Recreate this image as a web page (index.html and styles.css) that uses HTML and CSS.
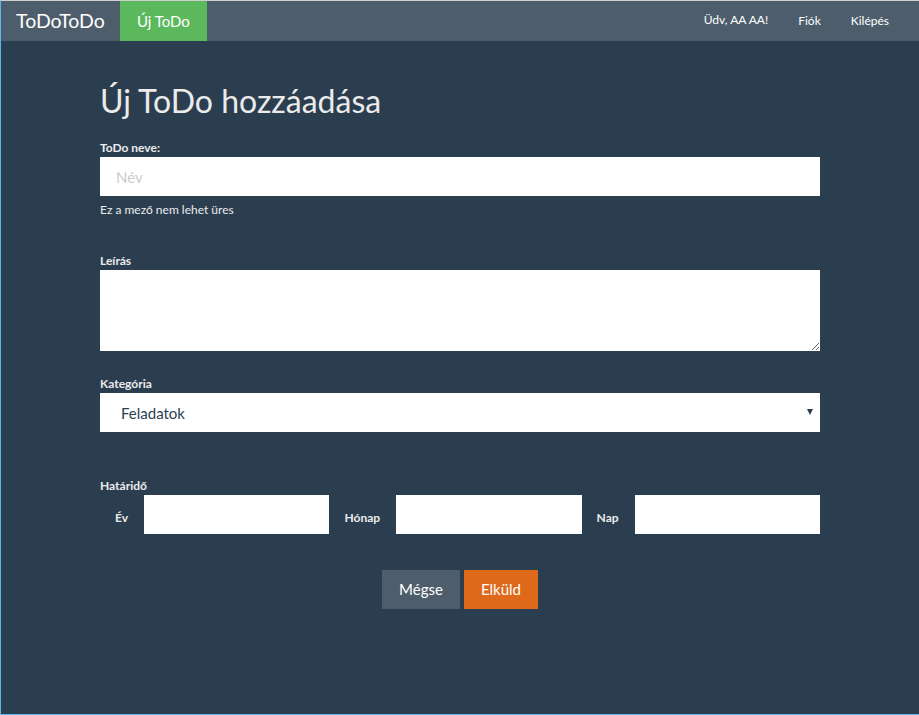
FILE: index.html
```html
<!DOCTYPE html>
<html lang="hu">
<head>
<meta charset="utf-8">
<title>Új ToDo hozzáadása</title>
<link rel="stylesheet" href="styles.css">
</head>
<body>
<div class="page">
  <nav class="navbar">
    <a class="brand" href="#">ToDoToDo</a>
    <a class="nav-new" href="#">Új ToDo</a>
    <div class="nav-right">
      <span class="nav-item nav-text">Üdv, AA AA!</span>
      <a class="nav-item" href="#">Fiók</a>
      <a class="nav-item" href="#">Kilépés</a>
    </div>
  </nav>
  <main class="container">
    <h1 class="title">Új ToDo hozzáadása</h1>
    <form class="form">
      <div class="group">
        <label class="label" for="name">ToDo neve:</label>
        <input class="control" id="name" type="text" placeholder="Név">
        <p class="help">Ez a mező nem lehet üres</p>
      </div>
      <div class="group group-desc">
        <label class="label" for="desc">Leírás</label>
        <textarea class="control textarea" id="desc"></textarea>
      </div>
      <div class="group group-cat">
        <label class="label" for="cat">Kategória</label>
        <div class="select-wrap">
          <select class="control select" id="cat">
            <option>Feladatok</option>
          </select>
        </div>
      </div>
      <div class="group group-date">
        <label class="label">Határidő</label>
        <div class="date-row">
          <label class="date-label" for="ev">Év</label>
          <input class="control date-input" id="ev" type="text">
          <label class="date-label" for="honap">Hónap</label>
          <input class="control date-input" id="honap" type="text">
          <label class="date-label" for="nap">Nap</label>
          <input class="control date-input" id="nap" type="text">
        </div>
      </div>
      <div class="actions">
        <button type="button" class="btn btn-cancel">Mégse</button>
        <button type="submit" class="btn btn-submit">Elküld</button>
      </div>
    </form>
  </main>
</div>
</body>
</html>
```
FILE: styles.css
```css
* {
  box-sizing: border-box;
}

html, body {
  margin: 0;
  padding: 0;
}

body {
  font-family: Lato, "Open Sans", "Liberation Sans", sans-serif;
  background: #2b3e50;
  color: #ebebeb;
  font-size: 15px;
}

.page {
  min-height: 715px;
  border-top: 1px solid #cfcfcf;
  border-left: 1px solid #5fb5ee;
  border-bottom: 1px solid #5fb5ee;
  background: #2b3e50;
}

.navbar {
  display: flex;
  align-items: stretch;
  height: 40px;
  background: #4e5d6c;
}

.navbar a {
  color: #ffffff;
  text-decoration: none;
}

.brand {
  padding: 0 15px;
  font-size: 19.5px;
  line-height: 40px;
  color: #ffffff;
}

.nav-new {
  padding: 0 17px;
  font-size: 15px;
  line-height: 40px;
  background: #5cb85c;
}

.nav-right {
  margin-left: auto;
  display: flex;
  padding-right: 15px;
}

.nav-item {
  padding: 0 15px;
  font-size: 12px;
  line-height: 40px;
  color: #ffffff;
}

.nav-text {
  line-height: 38px;
}

.container {
  width: 720px;
  margin: 0 auto;
}

.title {
  margin: 43px 0 0;
  font-size: 32px;
  line-height: 33px;
  font-weight: 400;
  color: #ebebeb;
}

.form {
  margin-top: 23px;
}

.label {
  display: block;
  font-size: 12px;
  line-height: 15px;
  font-weight: 700;
  margin-bottom: 2px;
  color: #ebebeb;
}

.control {
  display: block;
  width: 100%;
  height: 39px;
  border: 0;
  border-radius: 0;
  background: #ffffff;
  color: #2b3e50;
  font-family: Lato, "Open Sans", "Liberation Sans", sans-serif;
  font-size: 15px;
  padding: 8px 16px;
  outline: none;
}

.control::placeholder {
  color: #cccccc;
}

.help {
  margin: 5px 0 0;
  font-size: 12px;
  line-height: 17px;
  color: #ebebeb;
}

.group-desc {
  margin-top: 35px;
}

.textarea {
  height: 81px;
  resize: vertical;
}

.group-cat {
  margin-top: 25px;
}

.select-wrap {
  position: relative;
}

.select {
  appearance: none;
  -webkit-appearance: none;
  padding: 8px 16px 8px 21px;
}

.select-wrap::after {
  content: "";
  position: absolute;
  right: 7px;
  top: 16px;
  width: 0;
  height: 0;
  border-left: 3px solid transparent;
  border-right: 3px solid transparent;
  border-top: 6px solid #2b3e50;
  pointer-events: none;
}

.group-date {
  margin-top: 46px;
}

.date-row {
  display: flex;
  align-items: center;
}

.date-label {
  padding: 5px 16px 0 15px;
  font-size: 12px;
  font-weight: 700;
  color: #ebebeb;
}

.date-input {
  flex: 1 1 0;
  min-width: 0;
}

.actions {
  display: flex;
  justify-content: center;
  gap: 4px;
  margin-top: 36px;
}

.btn {
  height: 39px;
  padding: 0 17px;
  border: 0;
  border-radius: 0;
  font-family: Lato, "Open Sans", "Liberation Sans", sans-serif;
  font-size: 15px;
  line-height: 39px;
  color: #ffffff;
  cursor: pointer;
}

.btn-cancel {
  background: #4e5d6c;
}

.btn-submit {
  background: #df691a;
}
```
